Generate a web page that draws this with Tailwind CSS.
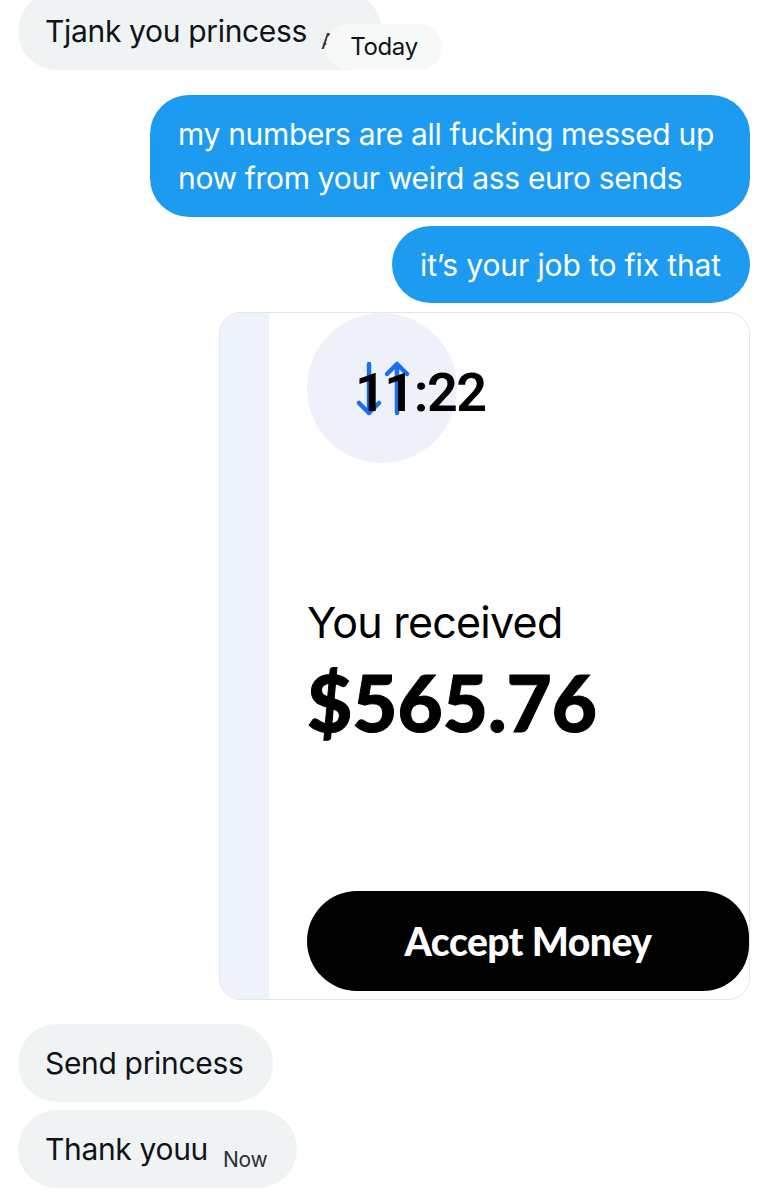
<!DOCTYPE html>
<html lang="en">
<head>
    <meta charset="UTF-8">
    <title>Messages</title>
    <script src="https://cdn.jsdelivr.net/npm/@tailwindcss/browser@4"></script>
</head>
<body class="bg-white">
    <div class="w-[768px] h-[1200px] overflow-hidden font-['Inter',sans-serif] text-[30px] leading-[44px] tracking-[-0.33px] text-[#0f1419]">
        <!-- top incoming message, cut off by the screenshot -->
        <div class="relative pl-[18px] -mt-[8px]">
            <div class="flex items-start w-[364px] h-[78px] rounded-[39px] bg-[#eff3f4] pl-[27px] pt-[17px] overflow-hidden whitespace-nowrap">
                <span>Tjank you princess</span>
                <span class="ml-[14px] mt-[11px] text-[21px] leading-[44px] text-[#2a3035]">A</span>
            </div>
            <div class="absolute left-[326px] top-[32px] w-[116px] h-[46px] rounded-[23px] bg-[#f7f9f9] text-[24px] leading-[46px] text-center">Today</div>
        </div>

        <!-- outgoing -->
        <div class="flex flex-col items-end gap-[9px] pr-[18px] mt-[25px]">
            <div class="w-[600px] h-[122px] rounded-[39px] bg-[#1d9bf0] text-white pl-[28px] pt-[17px]">
                my numbers are all fucking messed up<br>now from your weird ass euro sends
            </div>
            <div class="w-[358px] h-[77px] rounded-[39px] bg-[#1d9bf0] text-white pl-[28px] pt-[17px] tracking-[-0.12px]">it’s your job to fix that</div>

            <!-- payment screenshot -->
            <div class="flex w-[531px] h-[688px] rounded-[22px] border border-[#e1e6ea] overflow-hidden bg-white text-black">
                <div class="w-[49px] bg-[#eef2fa]"></div>
                <div class="flex-1 flex flex-col pl-[38px]">
                    <div class="relative w-[150px] h-[150px] rounded-full bg-[#eef1f9]">
                        <svg class="absolute left-[48px] top-[46px]" width="56" height="60" viewBox="0 0 56 60" fill="none" stroke="#1a6ff0" stroke-width="4.5" stroke-linecap="round" stroke-linejoin="round">
                            <path d="M14 5V54M4 44L14 54L24 44"/>
                            <path d="M42 54V5M32 15L42 5L52 15"/>
                        </svg>
                        <div class="absolute left-[48px] top-[50px] font-['Roboto',sans-serif] font-semibold text-[54px] leading-[60px] tracking-[-1.5px]">11:22</div>
                    </div>
                    <div class="mt-[134px] text-[43px] leading-[50px] tracking-[-0.75px]">You received</div>
                    <div class="mt-[7px] font-['Lato',sans-serif] font-black text-[78px] leading-[96px] tracking-normal [-webkit-text-stroke:1px_black]">$565.76</div>
                    <div class="mt-auto mb-[8px] h-[100px] rounded-l-[50px] rounded-r-[46px] bg-black text-white flex items-center justify-center font-['Lato',sans-serif] font-black text-[39px] tracking-[-0.5px]">Accept Money</div>
                </div>
            </div>
        </div>

        <!-- incoming -->
        <div class="flex flex-col items-start gap-[8px] pl-[18px] mt-[24px]">
            <div class="w-[255px] h-[78px] rounded-[39px] bg-[#eff3f4] pl-[27px] pt-[17px]">Send princess</div>
            <div class="w-[279px] h-[78px] rounded-[39px] bg-[#eff3f4] pl-[27px] pt-[17px] flex items-start whitespace-nowrap">
                <span>Thank youu</span>
                <span class="ml-[15px] mt-[11px] text-[21px] leading-[44px] text-[#2a3035]">Now</span>
            </div>
        </div>
    </div>
</body>
</html>
